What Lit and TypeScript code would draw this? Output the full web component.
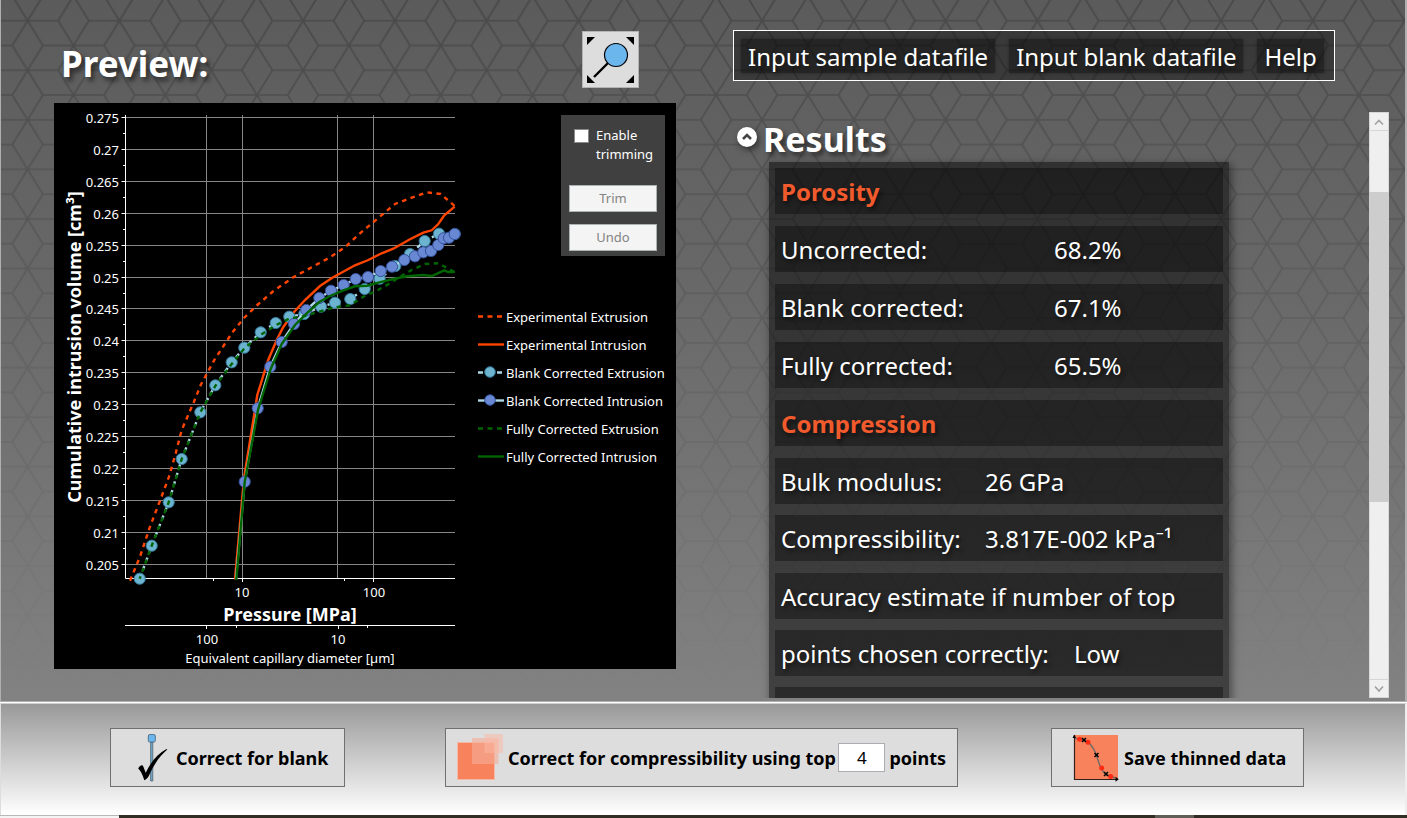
import { LitElement, html, svg, css } from "lit";
import { customElement, property, state } from "lit/decorators.js";

type Point = [number, number];

const EXPERIMENTAL_EXTRUSION: Point[] = [
  [130, 580.7], [140, 556.7], [150, 526.7], [160, 500.7], [169, 476.7], [175.7, 453.3], [181.7, 430],
  [194, 401.7], [200.7, 385], [214.7, 359.3], [232.3, 332.5], [244, 318], [257.3, 305], [273.5, 291],
  [293.3, 277.3], [306.7, 270], [330, 257.3], [345, 247.3], [360, 233.3], [376.7, 219.3], [395, 204],
  [411.7, 197.7], [426.7, 192.3], [440.7, 194], [454.7, 206],
];
const EXPERIMENTAL_INTRUSION: Point[] = [
  [235, 579.3], [244, 478.3], [257.3, 395], [268, 360.5], [276.7, 340], [283.3, 327], [294.3, 311.7],
  [305, 300], [320, 286], [332.3, 277.7], [355, 265.3], [368.3, 260], [381.7, 253.3], [393.3, 248.7],
  [410, 239.3], [423.3, 232.7], [431.7, 230.3], [438.3, 224], [444.3, 215.3], [454.7, 206.7],
];
const BLANK_EXTRUSION: Point[] = [
  [139.7, 578.7], [151.7, 545.7], [168.7, 502.3], [181.7, 459], [200.3, 412.3], [215.3, 385.3],
  [231.7, 362.3], [244.3, 347.7], [260.7, 332.3], [275.7, 323], [289.3, 316.7], [304.3, 314],
  [321, 306.7], [335, 302.7], [350.3, 299], [364.7, 289], [379.7, 278.7], [395.3, 266], [410, 254],
  [424.7, 241], [439, 233.7], [454.7, 234],
];
const BLANK_INTRUSION: Point[] = [
  [236, 579], [244.7, 481.7], [257.7, 408.3], [270.3, 366.7], [281.7, 342], [294, 324], [306.3, 310],
  [319.3, 298], [331, 290.7], [343.7, 285], [355.7, 279], [368, 277], [380.7, 271], [392, 266.7],
  [404.3, 260], [415, 256.3], [423.3, 252.3], [431, 251], [438.3, 245], [443.7, 238.3], [449, 237.7],
  [454.7, 234],
];
const FULL_EXTRUSION: Point[] = [
  [139.7, 578.7], [151.7, 545.7], [168.7, 502.3], [181.7, 459], [200.3, 412.3], [215.3, 386],
  [231.7, 364], [245, 347.7], [261.7, 334.3], [276.7, 324.7], [290, 318.3], [305, 316], [320, 311.3],
  [335, 307.3], [350, 305.3], [363.3, 296.7], [376.7, 290.7], [390, 283.3], [400, 276.7],
  [411.7, 270], [425, 264], [438.3, 263.3], [454.7, 272],
];
const FULL_INTRUSION: Point[] = [
  [236.3, 580], [244.7, 482], [258, 410], [270.7, 369], [281.7, 344], [295, 325], [306.7, 313.3],
  [319.3, 302], [330, 296], [343.3, 290.3], [355, 286.3], [367.3, 285.7], [378.3, 282.7],
  [393.3, 279], [406.7, 276.3], [423.3, 275], [431.7, 276], [444.3, 270.3], [448, 272], [454.7, 272],
];

const Y_LABELS = [
  "0.275", "0.27", "0.265", "0.26", "0.255", "0.25", "0.245", "0.24",
  "0.235", "0.23", "0.225", "0.22", "0.215", "0.21", "0.205",
];
const yTick = (i: number) => 117.7 + i * 31.88;
const path = (pts: Point[]) => pts.map((p) => p.join(",")).join(" ");

const ORANGE = "#ff4500";
const GREEN = "#006400";
const PALE = "#add8e6";

@customElement("intrusion-plot")
export class IntrusionPlot extends LitElement {
  static styles = css`
    :host { display: block; }
    svg { display: block; width: 100%; height: auto; overflow: visible; }
    text { fill: #fff; font-family: "Noto Sans", "Open Sans", sans-serif; }
    .tick { font-size: 13px; }
    .caption { font-size: 13px; text-anchor: middle; }
    .title { font-size: 18px; font-weight: 700; text-anchor: middle; }
    .end { text-anchor: end; }
    .mid { text-anchor: middle; }
    .grid { stroke: #868686; stroke-width: 1; }
    .axis { stroke: #fff; stroke-width: 1; }
    .line { fill: none; stroke-width: 2.4; }
  `;

  render() {
    return html`
      <svg viewBox="54 103 424 566" role="img" aria-label="Cumulative intrusion volume against pressure">
        ${Y_LABELS.map((label, i) => svg`
          <line class="grid" x1="126" x2="455" y1=${Math.floor(yTick(i)) + 0.5} y2=${Math.floor(yTick(i)) + 0.5} />
          <line class="axis" x1="121.5" x2="125" y1=${Math.floor(yTick(i)) + 0.5} y2=${Math.floor(yTick(i)) + 0.5} />
          <text class="tick end" x="119" y=${Math.floor(yTick(i)) + 6}>${label}</text>
          ${i < 14 ? svg`<line class="axis" x1="123" x2="125" y1=${Math.floor(yTick(i + 0.5)) + 0.5} y2=${Math.floor(yTick(i + 0.5)) + 0.5} />` : null}
        `)}
        ${[206.5, 242.5, 337.5, 373.5].map((x) => svg`<line class="grid" x1=${x} x2=${x} y1="115" y2="578" />`)}
        <path class="axis" fill="none" d="M125.5 115V578.500H455" />
        <path class="axis" fill="none" d="M213.500 578V581M344.500 578V581M242.500 578V582M373.500 578V582" />
        <path class="axis" fill="none" d="M125 625.500H455M206.500 625V629M338.500 625V629M236.500 625V628M367.500 625V628" />
        <text class="tick mid" x="242" y="597">10</text>
        <text class="tick mid" x="374" y="597">100</text>
        <text class="title" x="290" y="621">Pressure [MPa]</text>
        <text class="tick mid" x="207" y="644">100</text>
        <text class="tick mid" x="338" y="644">10</text>
        <text class="caption" x="290" y="663">Equivalent capillary diameter [µm]</text>
        <text class="title" transform="translate(81 347) rotate(-90)">Cumulative intrusion volume [cm³]</text>

        <polyline class="line" stroke=${ORANGE} stroke-dasharray="4.500 4.500" points=${path(EXPERIMENTAL_EXTRUSION)} />
        <polyline class="line" stroke=${ORANGE} points=${path(EXPERIMENTAL_INTRUSION)} />
        <polyline class="line" stroke=${PALE} stroke-dasharray="4.500 4.500" points=${path(BLANK_EXTRUSION)} />
        ${BLANK_EXTRUSION.map(([x, y]) => svg`<circle cx=${x} cy=${y} r="5.600" fill="#6cb3d0" stroke="#33789a" />`)}
        <polyline class="line" stroke=${PALE} points=${path(BLANK_INTRUSION)} />
        ${BLANK_INTRUSION.slice(1).map(([x, y]) => svg`<circle cx=${x} cy=${y} r="5.600" fill="#6988d4" stroke="#34509a" />`)}
        <polyline class="line" stroke=${GREEN} stroke-dasharray="4.500 4.500" stroke-dashoffset="2" points=${path(FULL_EXTRUSION)} />
        <polyline class="line" stroke=${GREEN} points=${path(FULL_INTRUSION)} />
      </svg>
    `;
  }
}

interface LegendEntry { label: string; color: string; dashed?: boolean; dot?: string; ring?: string; }

const LEGEND: LegendEntry[] = [
  { label: "Experimental Extrusion", color: ORANGE, dashed: true },
  { label: "Experimental Intrusion", color: ORANGE },
  { label: "Blank Corrected Extrusion", color: PALE, dashed: true, dot: "#6cb3d0", ring: "#33789a" },
  { label: "Blank Corrected Intrusion", color: PALE, dot: "#6988d4", ring: "#34509a" },
  { label: "Fully Corrected Extrusion", color: GREEN, dashed: true },
  { label: "Fully Corrected Intrusion", color: GREEN },
];

@customElement("preview-panel")
export class PreviewPanel extends LitElement {
  static styles = css`
    :host { display: flex; flex-direction: column; min-width: 0; color: #fff; }
    .head { display: flex; justify-content: space-between; align-items: flex-start; padding: 31px 37px 15px 7px; }
    h1 { margin: 9px 0 0; font-size: 35px; line-height: 48px; text-shadow: 3px 4px 5px rgba(0, 0, 0, 0.55); }
    .zoom { width: 57px; height: 57px; padding: 0; border: 1px solid #b4b4b4; background: #ddd; }
    .zoom svg { display: block; }
    .chart { display: grid; grid-template-columns: minmax(0, 424fr) minmax(0, 198fr); background: #000; }
    .side { display: flex; flex-direction: column; }
    .trim { align-self: flex-end; box-sizing: border-box; width: 104px; margin: 12px 11px 0 0; padding: 11px 8px 5px; background: #404040; font-size: 13px; line-height: 19px; display: grid; gap: 12px; }
    .check { display: grid; grid-template-columns: 15px 1fr; gap: 7px; padding: 0 0 9px 5px; }
    .check input { appearance: none; margin: 3px 0 0; width: 15px; height: 14px; background: #fff; border: 1px solid #8a8a8a; }
    .trim button { height: 27px; border: 1px solid #adb2b5; background: #f4f4f4; color: #838383; font: inherit; padding: 0; }
    .legend { list-style: none; margin: 47px 0 0; padding: 0; font-size: 13px; line-height: 28px; white-space: nowrap; }
    .legend li { display: flex; align-items: center; gap: 2px; }
  `;

  @state() private trimming = false;

  render() {
    return html`
      <div class="head">
        <h1>Preview:</h1>
        <button class="zoom" aria-label="Zoom to fit">
          <svg width="55" height="55" viewBox="0 0 55 55">
            <path d="M4 5h8l-8 8zM51 5v8l-8-8zM4 51v-8l8 8zM51 51h-8l8-8z" />
            <path d="M11 45L25 31" stroke="#000" stroke-width="2.400" />
            <circle cx="33" cy="23" r="11.500" fill="#6cb6ee" stroke="#000" stroke-width="1.200" />
          </svg>
        </button>
      </div>
      <div class="chart">
        <intrusion-plot></intrusion-plot>
        <div class="side">
          <div class="trim">
            <label class="check">
              <input type="checkbox" .checked=${this.trimming} @change=${() => (this.trimming = !this.trimming)} />
              <span>Enable trimming</span>
            </label>
            <button ?disabled=${!this.trimming}>Trim</button>
            <button ?disabled=${!this.trimming}>Undo</button>
          </div>
          <ul class="legend">
            ${LEGEND.map((e) => html`
              <li>
                <svg width="26" height="14" viewBox="0 0 26 14">
                  <line x1="0" x2="26" y1="6.500" y2="6.500" stroke=${e.color} stroke-width="2.400" stroke-dasharray=${e.dashed ? "5 4.5" : "none"} />
                  ${e.dot ? svg`<circle cx="12" cy="6" r="5.300" fill=${e.dot} stroke=${e.ring ?? ""} />` : null}
                </svg>
                <span>${e.label}</span>
              </li>`)}
          </ul>
        </div>
      </div>
    `;
  }
}

@customElement("results-panel")
export class ResultsPanel extends LitElement {
  static styles = css`
    :host { display: flex; flex-direction: column; min-width: 0; min-height: 0; color: #fff; }
    nav { align-self: flex-start; display: flex; gap: 14px; margin-top: 30px; padding: 8px 10px 7px 7px; border: 1px solid #fff; background: rgba(0, 0, 0, 0.38); font-size: 24px; line-height: 32px; }
    nav a { padding: 2px 7px 0; color: #fff; text-decoration: none; white-space: nowrap; background: rgba(0, 0, 0, 0.34); box-shadow: 0 0 3px rgba(0, 0, 0, 0.35); text-shadow: 2px 3px 4px rgba(0, 0, 0, 0.5); }
    .scroll { flex: 1; min-height: 0; display: flex; justify-content: space-between; margin: 31px 0 3px; }
    .view { overflow: hidden; padding: 4px 14px 0 4px; min-width: 0; }
    .toggle { display: flex; align-items: center; gap: 6px; padding: 0; border: 0; background: none; color: #fff; font: inherit; }
    .toggle svg { display: block; overflow: visible; filter: drop-shadow(2px 3px 3px rgba(0, 0, 0, 0.5)); }
    h2 { margin: 0; }
    .word { font-size: 34px; font-weight: 700; line-height: 46px; text-shadow: 3px 4px 5px rgba(0, 0, 0, 0.55); }
    .card { box-sizing: border-box; width: 460px; margin-left: 32px; padding: 6px 6px 20px; background: rgba(0, 0, 0, 0.5); box-shadow: 2px 3px 8px 1px rgba(0, 0, 0, 0.4); display: grid; gap: 12px; }
    .group { display: grid; gap: 12px; margin: 0; }
    .tight { gap: 11px; }
    .row { box-sizing: border-box; display: grid; height: 46px; padding: 2px 6px 0; align-items: center; font-size: 24px; line-height: 32px; background: rgba(0, 0, 0, 0.34); white-space: nowrap; text-shadow: 2px 3px 4px rgba(0, 0, 0, 0.55); }
    .wide { grid-template-columns: 273px 1fr; }
    .near { grid-template-columns: 204px 1fr; }
    .inline { grid-template-columns: 293px 1fr; }
    .heading { margin: 0; color: #f15a2c; font-weight: 700; }
    dd, dt { margin: 0; }
    .bar { flex: none; display: flex; flex-direction: column; width: 20px; background: #efefef; }
    .bar button { width: 20px; height: 19px; padding: 0; border: 1px solid #d6d6d6; background: #f0f0f0; }
    .bar svg { display: block; margin: auto; }
    .track { flex: 1; display: grid; grid-template-rows: 61fr 310fr 177fr; border: solid #dadada; border-width: 0 1px; }
    .thumb { grid-row: 2; margin: 0 -1px; background: #cdcdcd; }
  `;

  @state() private open = true;

  private row(kind: string, name: string, value: string) {
    return html`<div class="row ${kind}"><dt>${name}</dt><dd>${value}</dd></div>`;
  }

  render() {
    return html`
      <nav>
        <a href="#sample">Input sample datafile</a>
        <a href="#blank">Input blank datafile</a>
        <a href="#help">Help</a>
      </nav>
      <div class="scroll">
        <div class="view">
          <h2>
            <button class="toggle" aria-expanded=${this.open} @click=${() => (this.open = !this.open)}>
              <svg width="20" height="22" viewBox="0 0 20 22">
                <circle cx="10" cy="9" r="10" fill="#fff" />
                <path d="M6 11l4-4 4 4" fill="none" stroke="#444" stroke-width="2.600" />
              </svg>
              <span class="word">Results</span>
            </button>
          </h2>
          ${this.open ? html`
            <div class="card">
              <h3 class="row heading">Porosity</h3>
              <dl class="group">
                ${this.row("wide", "Uncorrected:", "68.2%")}
                ${this.row("wide", "Blank corrected:", "67.1%")}
                ${this.row("wide", "Fully corrected:", "65.5%")}
              </dl>
              <h3 class="row heading">Compression</h3>
              <dl class="group tight">
                ${this.row("near", "Bulk modulus:", "26 GPa")}
                ${this.row("near", "Compressibility:", "3.817E-002 kPa⁻¹")}
              </dl>
              <div class="group tight">
                <div class="row">Accuracy estimate if number of top</div>
                <div class="row inline"><span>points chosen correctly:</span><span>Low</span></div>
                <div class="row"></div>
              </div>
            </div>` : null}
        </div>
        <div class="bar">
          <button aria-label="Scroll up"><svg width="10" height="8" viewBox="0 0 10 8"><path d="M1 6.500l4-4 4 4" fill="none" stroke="#a0a0a0" stroke-width="1.600" /></svg></button>
          <div class="track"><div class="thumb"></div></div>
          <button aria-label="Scroll down"><svg width="10" height="8" viewBox="0 0 10 8"><path d="M1 1.500l4 4.500 4-4.500" fill="none" stroke="#a0a0a0" stroke-width="1.600" /></svg></button>
        </div>
      </div>
    `;
  }
}

@customElement("action-bar")
export class ActionBar extends LitElement {
  static styles = css`
    :host { display: flex; align-items: flex-start; padding: 24px 101px 28px 109px; background: linear-gradient(#999, #fff); border-top: 1px solid #d0d0d0; color: #000; }
    .box { box-sizing: border-box; display: flex; align-items: center; height: 59px; border: 1px solid #707070; background: #ddd; font: 700 18px/24px "Noto Sans", "Open Sans", sans-serif; color: #000; white-space: nowrap; }
    .blank { width: 235px; padding: 0 0 0 27px; gap: 8px; }
    .compress { width: 513px; margin-left: 100px; padding: 0 11px; }
    .save { width: 253px; margin-left: auto; padding: 0 0 0 20px; gap: 5px; }
    .plain { display: flex; align-items: center; gap: 4px; padding: 0; border: 0; background: none; font: inherit; color: inherit; }
    input { box-sizing: border-box; width: 47px; height: 29px; margin: 0 4px 0 auto; padding: 0; border: 1px solid #abadb3; background: #fff; color: #000; text-align: center; font: 400 17px/24px "Noto Sans", "Open Sans", sans-serif; }
    svg { display: block; flex: none; }
  `;

  @property({ type: Number }) points = 4;

  render() {
    return html`
      <button class="box blank">
        <svg width="30" height="48" viewBox="138 734 30 48">
          <path d="M150.600 742h2.200v39h-2.200z" fill="#6ea6cc" stroke="#4c5a66" stroke-width="0.700" />
          <rect x="148.300" y="734.500" width="7" height="7.600" rx="1.500" fill="#6cb6ee" stroke="#4c6a80" stroke-width="0.900" />
          <path d="M138.200 768.500c1.200-2.800 4.300-4.300 5-2.200l2.500 6.500c4.500-9.500 11-18.500 20.800-23.800l.8.500c-7.500 6.500-13.500 15-18.500 26.500-.8 1.800-2.700 3.300-4.500 4.300-1.500-4.700-3.300-9.300-6.100-11.800z" />
        </svg>
        <span>Correct for blank</span>
      </button>
      <div class="box compress">
        <button class="plain">
          <svg width="47" height="48" viewBox="457 734 47 48">
            <rect x="457.500" y="742.500" width="37" height="37" fill="#f7825c" stroke="#f3b9a6" />
            <rect x="472" y="738" width="26.500" height="26" fill="#f5ad98" opacity="0.600" />
            <rect x="484.500" y="734" width="18.500" height="19" fill="#fbb8a4" opacity="0.500" />
          </svg>
          <span id="top">Correct for compressibility using top</span>
        </button>
        <input type="text" aria-labelledby="top" .value=${String(this.points)} />
        <span>points</span>
      </div>
      <button class="box save">
        <svg width="47" height="48" viewBox="1072 734 47 48">
          <path d="M1074 735h44v44h-44z" fill="#f7825c" />
          <path d="M1074.500 735V779.500H1117" fill="none" stroke="#33201a" stroke-width="1.200" />
          <path d="M1072.500 738l1.800-3.500 1.800 3.500zM1115.500 776.800l3.300 2.500-3.300 2.500z" />
          <path d="M1075 738.500C1082 739 1086 740 1089 743C1097 751 1096 756 1099 763C1102 773 1106 775 1115 778" fill="none" stroke="#6f6a68" stroke-width="1.400" />
          <g fill="#ff2a12"><circle cx="1079.500" cy="739.300" r="2.500" /><circle cx="1088" cy="742.200" r="2.500" /><circle cx="1101.700" cy="768" r="2.500" /><circle cx="1110.700" cy="776.500" r="2.500" /></g>
          <g fill="none" stroke="#000" stroke-width="1.500"><path d="M1082 738l4 4m0-4l-4 4M1094.500 753l4 4m0-4l-4 4M1104 772l4 4m0-4l-4 4" /></g>
        </svg>
        <span>Save thinned data</span>
      </button>
    `;
  }
}

@customElement("app-root")
export class AppRoot extends LitElement {
  static styles = css`
    :host { display: flex; flex-direction: column; height: 100vh; overflow: hidden; font-family: "Noto Sans", "Open Sans", sans-serif; }
    .stage { flex: 1; min-height: 0; display: grid; border: solid #b0b0b0; border-width: 0 2px 1px 1px; background: linear-gradient(#5b5b5b, #696969 43%, #828282); }
    .pattern { grid-area: 1 / 1; width: 100%; height: 100%; min-height: 0; display: block; }
    .content { grid-area: 1 / 1; min-height: 0; z-index: 1; display: grid; grid-template-columns: minmax(0, 622fr) minmax(0, 656fr); grid-template-rows: minmax(0, 1fr); gap: 57px; padding: 0 16px 0 53px; }
    action-bar { border-left: 1px solid #ddd; border-right: 2px solid #eee; }
    .rule { height: 1px; background: #fff; }
    .desk { display: flex; height: 3px; background: #322d24; }
    .pane { width: 119px; box-sizing: border-box; background: #f4f4f4; border-top: 1px solid #b8b8b8; }
    .chip { width: 39px; margin: 0 213px 0 auto; background: #615d57; }
  `;

  render() {
    return html`
      <div class="stage">
        <svg class="pattern" aria-hidden="true">
          <defs>
            <pattern id="cubes" patternUnits="userSpaceOnUse" x="26.600" y="20.700" width="91.800" height="49.560">
              <path
                d="M0 0H30.600M61.200 0H91.800M0 49.560H30.600M61.200 49.560H91.800M15.300 24.780H76.500M0 0L15.300 24.780L0 49.560M91.800 0L76.500 24.780L91.800 49.560M30.600 0L45.900 24.780L30.600 49.560M61.200 0L45.900 24.780L61.200 49.560"
                fill="none" stroke="#000" stroke-width="1.700" />
            </pattern>
            <linearGradient id="fade" x2="0" y2="1">
              <stop offset="0" stop-color="#fff" />
              <stop offset="0.450" stop-color="#fff" stop-opacity="0.500" />
              <stop offset="1" stop-color="#fff" stop-opacity="0" />
            </linearGradient>
            <mask id="veil"><rect width="100%" height="100%" fill="url(#fade)" /></mask>
          </defs>
          <rect width="100%" height="100%" fill="url(#cubes)" mask="url(#veil)" opacity="0.200" />
        </svg>
        <div class="content">
          <preview-panel></preview-panel>
          <results-panel></results-panel>
        </div>
      </div>
      <div class="rule"></div>
      <action-bar></action-bar>
      <div class="desk"><div class="pane"></div><div class="chip"></div></div>
    `;
  }
}
